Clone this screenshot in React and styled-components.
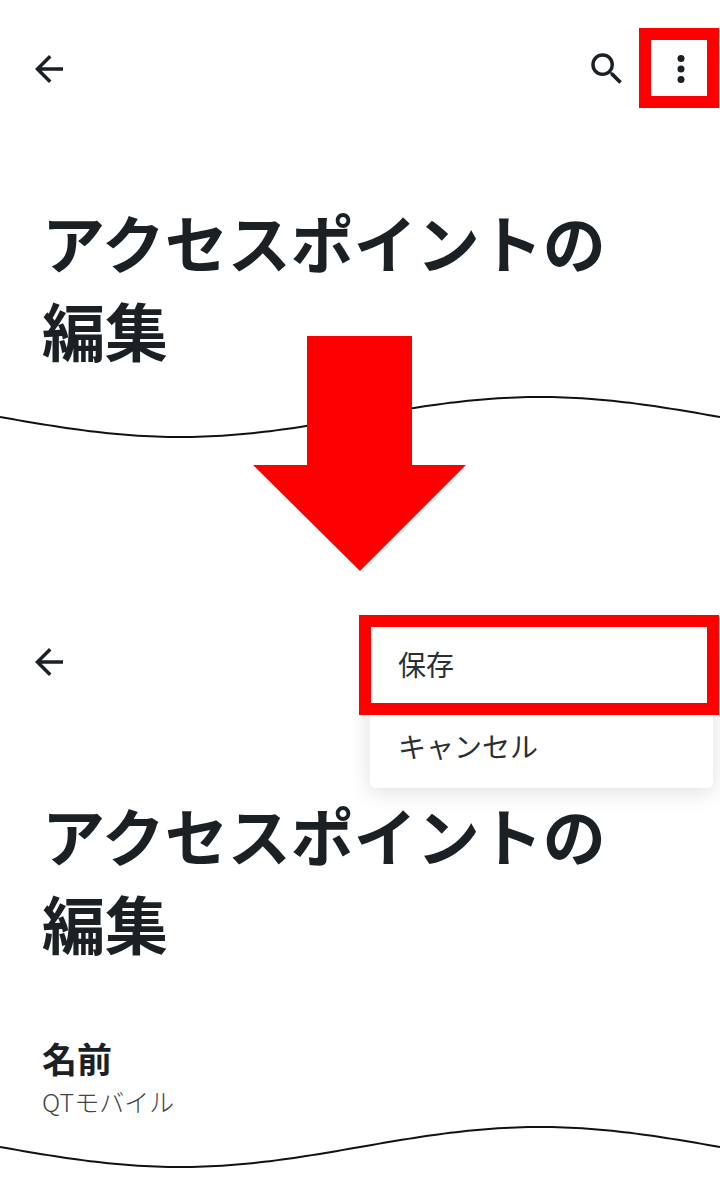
import React from "react";
import styled, { createGlobalStyle } from "styled-components";

const Global = createGlobalStyle`
  html, body { margin: 0; padding: 0; background: #fff; }
  body { font-family: "Noto Sans CJK JP", "Noto Sans", sans-serif; color: #1a2024; }
`;

const Page = styled.main`
  position: relative;
  width: 720px;
  height: 1200px;
  overflow: hidden;
  background: #fff;
`;

const Screen = styled.section`
  position: relative;
  display: flex;
  flex-direction: column;
  height: ${(p) => p.$height}px;
`;

const Toolbar = styled.header`
  display: flex;
  align-items: center;
  justify-content: space-between;
  height: 137px;
  padding: 0 18px 0 28px;
`;

const Actions = styled.div`
  display: flex;
  align-items: center;
  gap: 32px;
`;

const IconButton = styled.span`
  position: relative;
  display: flex;
  width: 42px;
  height: 42px;
  color: #1a2024;
`;

const Icon = styled.svg`
  width: 42px;
  height: 42px;
  fill: currentColor;
  display: block;
`;

const IconHighlight = styled.span`
  position: absolute;
  left: -21px;
  top: -20px;
  width: 80px;
  height: 80px;
  box-sizing: border-box;
  border: 12px solid #ff0000;
`;

const Title = styled.h1`
  margin: 60px 0 0;
  padding-left: 42px;
  width: 600px;
  font-size: 63px;
  line-height: 88px;
  font-weight: 700;
  color: #1a2024;
`;

const Field = styled.div`
  display: flex;
  flex-direction: column;
  margin-top: 69px;
  padding-left: 42px;
`;

const FieldLabel = styled.div`
  font-size: 35px;
  line-height: 46px;
  font-weight: 700;
  color: #1a2024;
`;

const FieldValue = styled.div`
  font-size: 25px;
  line-height: 40px;
  font-weight: 300;
  color: #3f4548;
`;

const Wave = styled.svg`
  display: block;
  flex: none;
  width: 720px;
  height: 44px;
  margin-top: ${(p) => p.$top}px;
`;

const Menu = styled.nav`
  position: absolute;
  right: 7px;
  top: 30px;
  width: 343px;
  height: 165px;
  display: flex;
  flex-direction: column;
  background: #fff;
  border-radius: 6px;
  box-shadow: 0 4px 22px rgba(0, 0, 0, 0.13);
`;

const MenuItem = styled.div`
  position: relative;
  flex: 1;
  display: flex;
  align-items: center;
  padding: 0 0 1px 28px;
  font-size: 28px;
  font-weight: 400;
  color: #2a2f32;
`;

const ItemHighlight = styled.span`
  position: absolute;
  inset: -8px -6px -9px -11px;
  border: 12px solid #ff0000;
`;

const DownArrow = styled.svg`
  position: absolute;
  left: 253px;
  top: 336px;
  width: 213px;
  height: 235px;
  fill: #ff0000;
`;

const wavePath = (() => {
  const points = [];
  for (let x = 0; x <= 720; x += 6) {
    const y = 22 + 20 * Math.sin((x / 720) * 2 * Math.PI);
    points.push(`${x} ${y.toFixed(2)}`);
  }
  return `M${points.join("L")}`;
})();

const WaveLine = ({ top }) => (
  <Wave $top={top} viewBox="0 0 720 44" fill="none">
    <path d={wavePath} stroke="#111" strokeWidth="2" />
  </Wave>
);

const BackIcon = () => (
  <IconButton>
    <Icon viewBox="0 0 24 24">
      <path d="M20 11H7.83l5.59-5.59L12 4l-8 8 8 8 1.41-1.41L7.83 13H20v-2z" />
    </Icon>
  </IconButton>
);

export default function App() {
  return (
    <Page>
      <Global />
      <Screen $height={593}>
        <Toolbar>
          <BackIcon />
          <Actions>
            <IconButton>
              <Icon viewBox="0 0 24 24">
                <path d="M15.5 14h-.79l-.28-.27A6.47 6.47 0 0 0 16 9.5 6.5 6.5 0 1 0 9.5 16c1.61 0 3.09-.59 4.23-1.57l.27.28v.79l5 4.99L20.49 19l-4.99-5zm-6 0C7.01 14 5 11.99 5 9.5S7.01 5 9.5 5 14 7.01 14 9.5 11.99 14 9.5 14z" />
              </Icon>
            </IconButton>
            <IconButton>
              <Icon viewBox="0 0 24 24">
                <circle cx="12" cy="6" r="2" />
                <circle cx="12" cy="12" r="2" />
                <circle cx="12" cy="18" r="2" />
              </Icon>
              <IconHighlight />
            </IconButton>
          </Actions>
        </Toolbar>
        <Title>アクセスポイントの編集</Title>
        <WaveLine top={22} />
      </Screen>
      <Screen $height={607}>
        <Toolbar>
          <BackIcon />
        </Toolbar>
        <Title>アクセスポイントの編集</Title>
        <Field>
          <FieldLabel>名前</FieldLabel>
          <FieldValue>QTモバイル</FieldValue>
        </Field>
        <WaveLine top={4} />
        <Menu>
          <MenuItem>
            保存
            <ItemHighlight />
          </MenuItem>
          <MenuItem>キャンセル</MenuItem>
        </Menu>
      </Screen>
      <DownArrow viewBox="0 0 213 235">
        <polygon points="54,0 159,0 159,129 213,129 107,235 0,129 54,129" />
      </DownArrow>
    </Page>
  );
}
